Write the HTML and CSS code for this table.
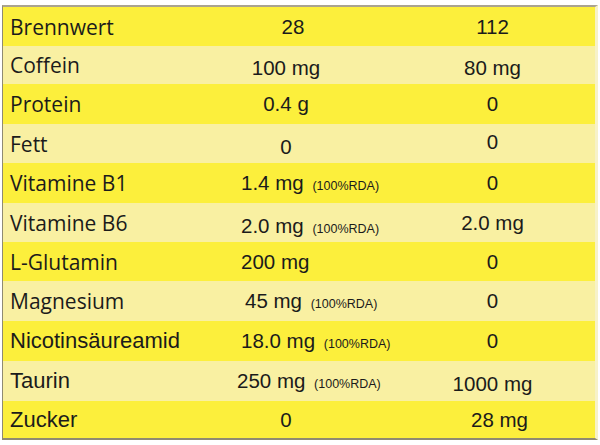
FILE: index.html
```html
<!DOCTYPE html>
<html lang="de">
<head>
<meta charset="utf-8">
<link rel="stylesheet" href="styles.css">
</head>
<body>
<div class="page">
  <div class="table">
    <div class="row hi"><div class="lab f1">Brennwert</div><div class="v2 nudge-r">28</div><div class="v3">112</div></div>
    <div class="row lo"><div class="lab f1">Coffein</div><div class="v2 low">100 mg</div><div class="v3 low">80 mg</div></div>
    <div class="row hi"><div class="lab f1">Protein</div><div class="v2">0.4 g</div><div class="v3">0</div></div>
    <div class="row lo"><div class="lab f1">Fett</div><div class="v2 low">0</div><div class="v3 high">0</div></div>
    <div class="row hi"><div class="lab f1">Vitamine B1</div><div class="v2 rda">1.4 mg <small>(100%RDA)</small></div><div class="v3">0</div></div>
    <div class="row lo"><div class="lab f1">Vitamine B6</div><div class="v2 rda low">2.0 mg <small>(100%RDA)</small></div><div class="v3">2.0 mg</div></div>
    <div class="row hi"><div class="lab f1">L-Glutamin</div><div class="v2 rda">200 mg</div><div class="v3">0</div></div>
    <div class="row lo"><div class="lab f1">Magnesium</div><div class="v2 rda in">45 mg <small>(100%RDA)</small></div><div class="v3">0</div></div>
    <div class="row hi"><div class="lab f2">Nicotinsäureamid</div><div class="v2 rda">18.0 mg <small>(100%RDA)</small></div><div class="v3">0</div></div>
    <div class="row lo"><div class="lab f2">Taurin</div><div class="v2 rda out">250 mg <small>(100%RDA)</small></div><div class="v3 low">1000 mg</div></div>
    <div class="row hi"><div class="lab f2">Zucker</div><div class="v2">0</div><div class="v3 nudge-r">28 mg</div></div>
  </div>
</div>
</body>
</html>
```

FILE: styles.css
```css
html, body {
  margin: 0;
  padding: 0;
  background: #ffffff;
}
.page {
  padding: 5px 0 0 2px;
}
.table {
  width: 592px;
  border-top: 2px solid #aaa390;
  border-left: 1px solid #8f8a72;
  border-bottom: 2px solid #8f8a72;
  border-right: 3px solid #f7f2c8;
  display: grid;
  grid-template-rows: 39px 38px 40px 39px 40px 39px 39px 40px 40px 40px 37px;
  color: #1b1b1b;
  font-family: "Liberation Sans", Arial, sans-serif;
}
.row {
  display: grid;
  grid-template-columns: 187px 202px 1fr;
  align-items: center;
}
.hi { background: #fcef3c; }
.lo { background: #f9f0a2; }
.lab {
  padding-left: 7px;
  font-size: 22px;
}
.f1 {
  font-family: "Open Sans", "Noto Sans", sans-serif;
  font-size: 21px;
}
.f2 {
  font-family: "Liberation Sans", Arial, sans-serif;
  font-size: 22px;
}
.v2, .v3 {
  font-size: 20.5px;
  text-align: center;
}
.v2 { padding-right: 10px; }
.v2.rda {
  text-align: left;
  padding-left: 51px;
  padding-right: 0;
}
.v2.rda.in { padding-left: 55px; }
.v2.rda.out { padding-left: 47px; }
.v3 { padding-right: 2px; }
.v2.nudge-r { padding-left: 4px; padding-right: 0; }
.v3.nudge-r { padding-left: 12px; padding-right: 0; }
.low { padding-top: 6px; }
.high { padding-bottom: 4px; }
small {
  font-size: 12.5px;
  margin-left: 3px;
}
```
